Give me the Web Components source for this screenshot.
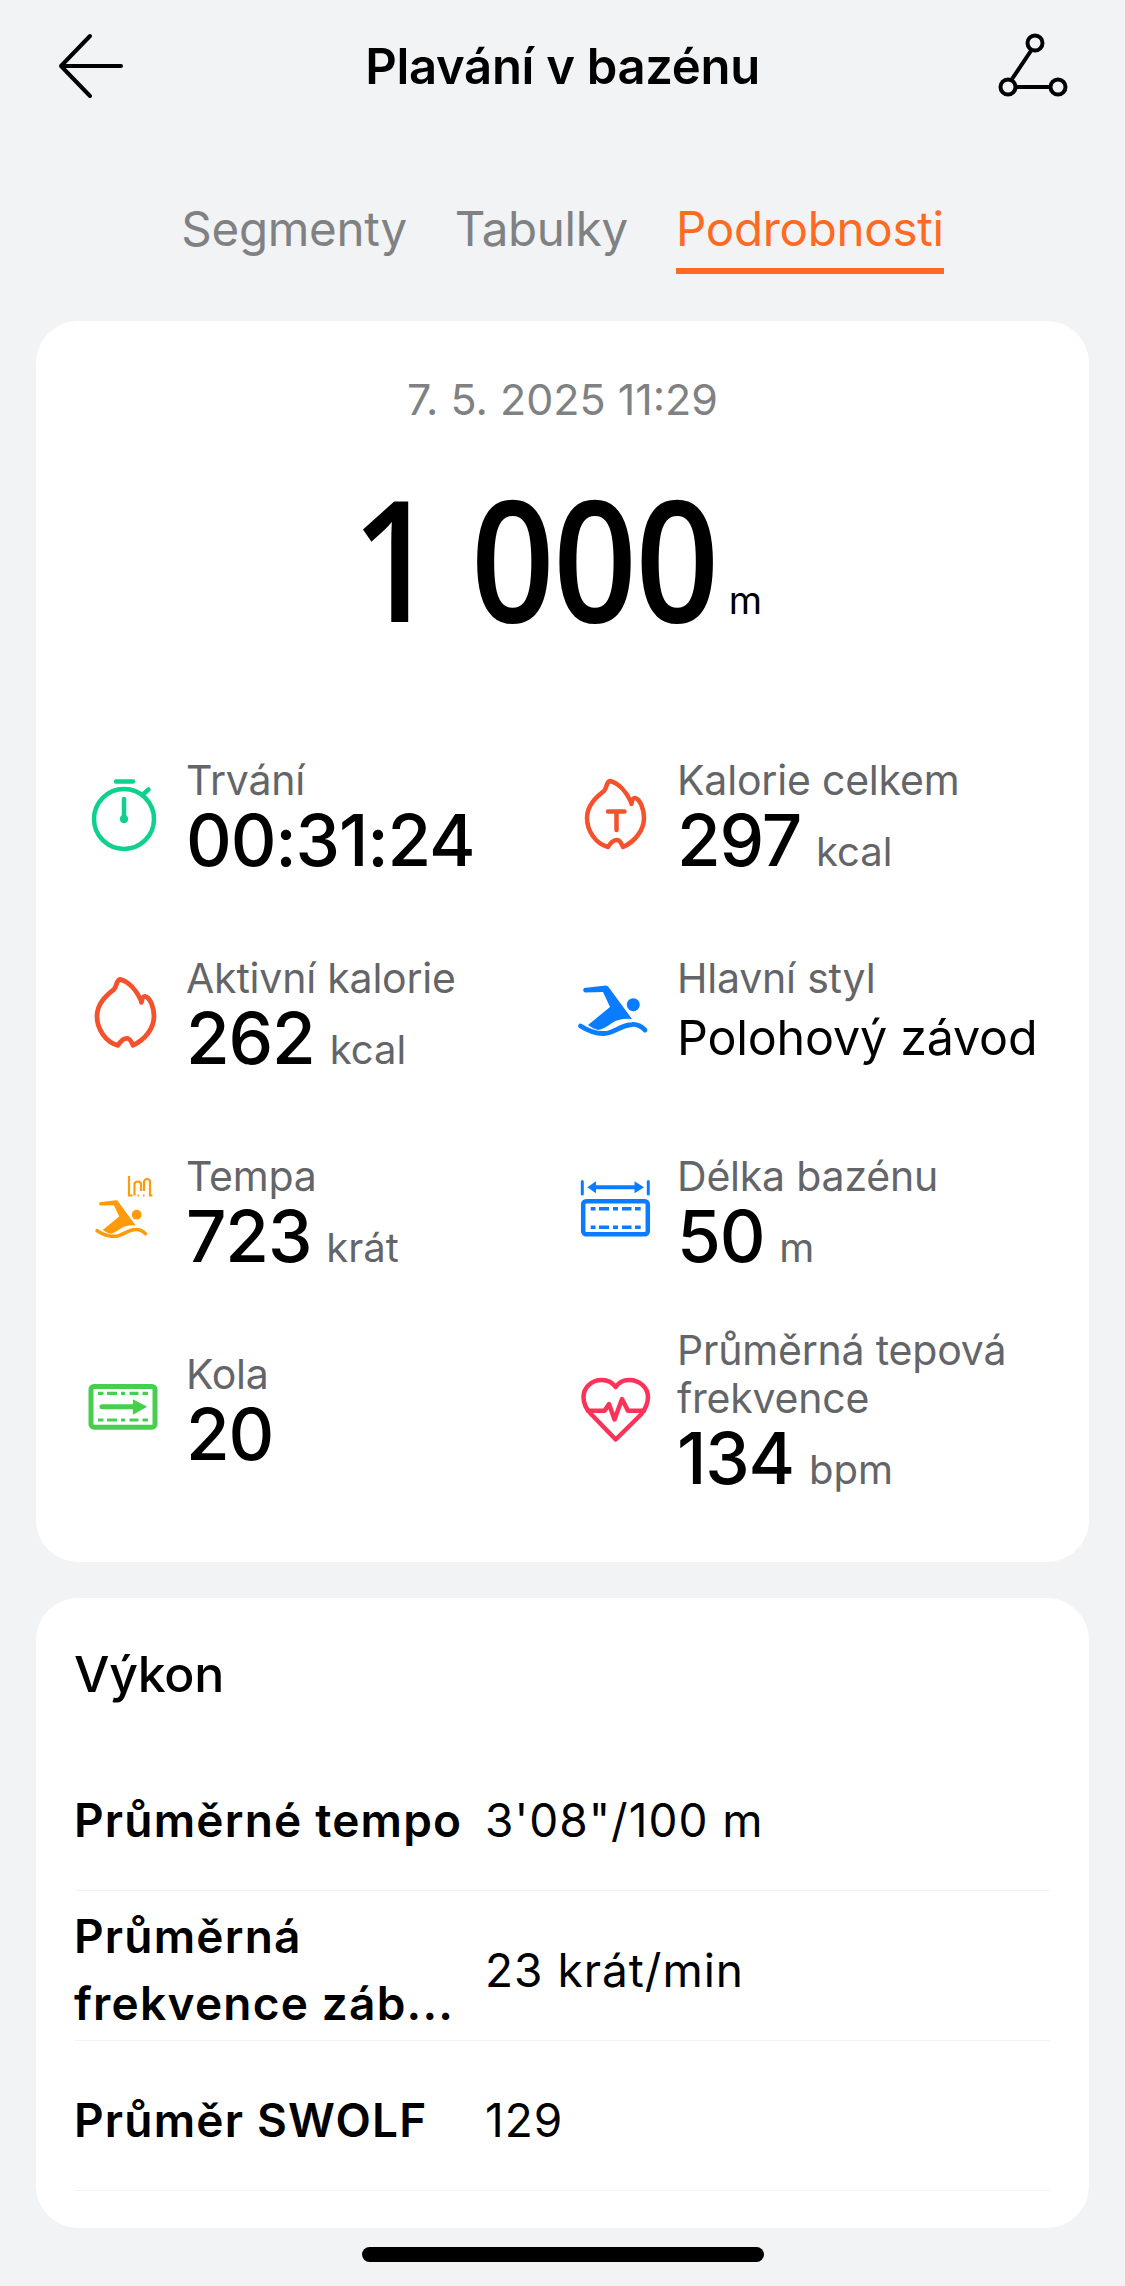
<!DOCTYPE html>
<html lang="cs">
<head>
<meta charset="utf-8">
<title>Plavání v bazénu</title>
<style>
html,body{margin:0;padding:0;background:#f2f3f5;}
body{width:1125px;height:2286px;overflow:hidden;font-family:Inter,"Liberation Sans",sans-serif;color:#000;}
</style>
</head>
<body>
<swim-page>
  <app-header slot="top">Plavání v bazénu</app-header>
  <tab-bar>
    <tab-item>Segmenty</tab-item>
    <tab-item>Tabulky</tab-item>
    <tab-item active>Podrobnosti</tab-item>
  </tab-bar>
  <summary-card date="7. 5. 2025 11:29" distance="1 000" unit="m">
    <stat-item icon="watch" label="Trvání" value="00:31:24"></stat-item>
    <stat-item icon="flame-t" label="Kalorie celkem" value="297" unit="kcal"></stat-item>
    <stat-item icon="flame" label="Aktivní kalorie" value="262" unit="kcal"></stat-item>
    <stat-item icon="swim" label="Hlavní styl" value="Polohový závod" plain></stat-item>
    <stat-item icon="strokes" label="Tempa" value="723" unit="krát"></stat-item>
    <stat-item icon="pool" label="Délka bazénu" value="50" unit="m"></stat-item>
    <stat-item icon="lap" label="Kola" value="20"></stat-item>
    <stat-item icon="heart" label="Průměrná tepová frekvence" value="134" unit="bpm"></stat-item>
  </summary-card>
  <perf-card heading="Výkon">
    <perf-row label="Průměrné tempo" value="3'08&quot;/100 m"></perf-row>
    <perf-row label="Průměrná frekvence záb..." value="23 krát/min"></perf-row>
    <perf-row label="Průměr SWOLF" value="129"></perf-row>
  </perf-card>
  <home-indicator></home-indicator>
</swim-page>
<script>
const ICONS = {
  watch:{box:"25 30 80 80",svg:`<g fill="none" stroke="#0fd08c" stroke-width="4.5" stroke-linecap="round"><circle cx="64" cy="75" r="30"/><path d="M56 37.5H73M83 50.5L88.5 45.5M64 55V75"/></g><circle cx="64" cy="75" r="4.2" fill="#0fd08c"/>`},
  "flame-t":{box:"15 20 80 80",svg:`<g fill="none" stroke="#f4512c" stroke-width="4.5" stroke-linecap="round" stroke-linejoin="round"><path d="M50 27C58 29 66 37 71 48L71.5 50C72 46 73 44 75 44C80 45 84 55 84 64C84 77 74 88 63 93C61 88 59 86 57 86C54 86 51 88 48 93C36 90 27 77 27 64C27 50 38 42 44 37C47 34 46 28 50 27Z"/><path d="M48 57.5H64.5M56.5 57.5V76"/></g>`},
  flame:{box:"25 18 80 80",svg:`<g fill="none" stroke="#f4512c" stroke-width="4.8" stroke-linecap="round" stroke-linejoin="round" transform="translate(10,-1.7)"><path d="M50 27C58 29 66 37 71 48L71.5 50C72 46 73 44 75 44C80 45 84 55 84 64C84 77 74 88 63 93C61 88 59 86 57 86C54 86 51 88 48 93C36 90 27 77 27 64C27 50 38 42 44 37C47 34 46 28 50 27Z"/></g>`},
  swim:{box:"15 18 80 80",svg:`<g fill="#0a7cff"><path d="M24 34L46 31.5Q47.500 31.500 48.500 33L72 65Q60 64 52 69Q44 75 38 76Q33 75 28 71L50 53L43 38L25 38.500Q22 37 24 34Z"/><circle cx="73.300" cy="50.700" r="6.500"/></g><path d="M20.500 72C30 78 38 81 48 79C56 77 62 71 72 70.500C78 70 82 73 85 76" fill="none" stroke="#0a7cff" stroke-width="4.800" stroke-linecap="round"/>`},
  strokes:{box:"25 16 80 80",svg:`<g transform="translate(21.700,22.700) scale(.75)"><g fill="#ff9a0a"><path d="M24 34L46 31.5Q47.500 31.500 48.500 33L72 65Q60 64 52 69Q44 75 38 76Q33 75 28 71L50 53L43 38L25 38.500Q22 37 24 34Z"/><circle cx="73.300" cy="50.700" r="6.500"/></g><path d="M20.500 72C30 78 38 81 48 79C56 77 62 71 72 70.500C78 70 82 73 85 76" fill="none" stroke="#ff9a0a" stroke-width="4.800" stroke-linecap="round"/></g><path d="M69 22V41.500H72.500M74.500 41.500V30Q75 27.500 78 27.500Q80.500 27.500 81 30V37M84 37V28Q84.500 25 87 25Q90 25 90 28V41.500H92.500M77.500 41.500H79M83 41.500H84.500" fill="none" stroke="#ff9a0a" stroke-width="2.200"/>`},
  pool:{box:"15 16 80 80",svg:`<g fill="none" stroke="#0a7cff"><rect x="23.200" y="47.200" width="64.600" height="33" rx="3" stroke-width="4.500"/><path d="M22.300 27.500V40M88.300 27.500V40" stroke-width="3" stroke-linecap="round"/><path d="M33 33.300H78" stroke-width="4"/><path d="M30.700 54.700H35.500M39 54.700H49M53 54.700H58M62 54.700H71.500M75 54.700H80.700M30.700 73.300H35.500M39 73.300H49M53 73.300H58M62 73.300H71.500M75 73.300H80.700" stroke-width="3.400"/></g><path d="M27.300 33.300L36 27.300V39.300ZM84 33.300L74.500 27.300V39.300Z" fill="#0a7cff"/>`},
  lap:{box:"25 14 80 80",svg:`<g fill="none" stroke="#46cf4c"><rect x="31" y="32.500" width="64" height="40.700" rx="3" stroke-width="5"/><path d="M38 39.300H43.500M47 39.300H57M61 39.300H65M69.500 39.300H78.500M82.500 39.300H88M38 66H43.500M47 66H57M61 66H65M69.500 66H78.500M82.500 66H88" stroke-width="3.200"/><path d="M42 52.700H75" stroke-width="5" stroke-linecap="round"/></g><path d="M73.300 46L86.300 52.700L73.300 60Z" fill="#46cf4c" stroke="#46cf4c" stroke-linejoin="round" stroke-width="1"/>`},
  heart:{box:"15 24 80 80",svg:`<g fill="none" stroke="#fb3358" stroke-width="4.500" stroke-linecap="round" stroke-linejoin="round"><path d="M55.700 43C52 38 47 36 42 36C31 36 23.500 44 23.500 53C23.500 60 26 65 31 70L55.700 95.500L80.500 71C85.500 65 88 60 88 53C88 44 80 36 69 36C64 36 59 38 55.700 43Z"/><path d="M28 66.700H44.500L49 60L54.500 75.500L62 55L68 66.700H84"/></g>`}
};
function def(name, css, html){
  customElements.define(name, class extends HTMLElement{
    constructor(){super();this.attachShadow({mode:"open"});}
    connectedCallback(){
      const a=n=>this.getAttribute(n)??"";
      this.shadowRoot.innerHTML=`<style>${css}</style>`+(typeof html==="function"?html(a,this):html);
    }
  });
}
def("swim-page",`:host{display:flex;flex-direction:column;width:1125px;height:2286px;box-sizing:border-box;background:#f2f3f5}`,`<slot name="top"></slot><slot></slot>`);
def("app-header",`:host{display:flex;align-items:center;justify-content:space-between;height:132px;flex:none;padding:0 56px 0 58px;position:relative}
 svg{display:block}
 .t{position:absolute;left:0;right:0;top:0;height:132px;display:flex;align-items:center;justify-content:center;font:600 49px/1 Inter,sans-serif;letter-spacing:-.3px}`,
`<svg width="66" height="66" viewBox="0 0 66 66" fill="none" stroke="#000" stroke-width="4" stroke-linecap="round" stroke-linejoin="round"><path d="M3 33H63M32 3L3 33L32 63"/></svg>
 <div class="t"><slot></slot></div>
 <svg width="72" height="66" viewBox="0 0 72 66" fill="none" stroke="#000" stroke-width="4"><circle cx="38" cy="10" r="7.500"/><circle cx="11" cy="54" r="7.500"/><circle cx="61" cy="54" r="7.500"/><path d="M34.500 17L14 47.500M18.500 54H53.500"/></svg>`);
def("tab-bar",`:host{display:flex;justify-content:center;gap:48px;height:76px;margin-top:59px;flex:none}`,`<slot></slot>`);
def("tab-item",`:host{display:block;box-sizing:border-box;height:83px;color:#808183;font:400 47.500px/76px Inter,sans-serif;letter-spacing:-.3px;white-space:nowrap}
 :host([active]){color:#ff6a22;border-bottom:6px solid #ff6a22}`,`<slot></slot>`);
def("summary-card",`:host{display:block;box-sizing:border-box;flex:none;width:1053px;height:1241px;margin:54px 0 0 36px;background:#fff;border-radius:42px;padding-top:53px}
 .d{height:50px;text-align:center;font:400 43px/50px Inter,sans-serif;color:#808183}
 .h{display:flex;justify-content:center;align-items:baseline;height:180px;margin-top:43px;padding-right:11px}
 .n{display:inline-block;width:377px;white-space:nowrap;font:600 168px/180px "Open Sans",sans-serif;transform:scaleX(.875);transform-origin:0 50%;letter-spacing:-2px}
 .u{font:400 38px/1 Inter,sans-serif;transform:translateY(-8px)}
 .g{display:grid;grid-template-columns:490px 1fr;grid-auto-rows:198px;margin-top:68px;padding-left:49px}`,
(a)=>`<div class="d">${a("date")}</div><div class="h"><span class="n">${a("distance")}</span><span class="u">${a("unit")}</span></div><div class="g"><slot></slot></div>`);
def("stat-item",`:host{display:flex;align-items:center;gap:22px;min-width:0}
 :host(:nth-child(odd)){gap:21px}
 svg{display:block;flex:none}
 .b{min-width:0;width:380px}
 .l{font:400 41px/48px Inter,sans-serif;color:#646568;letter-spacing:-.2px}
 .v{font:500 71px/66px Inter,sans-serif;letter-spacing:-1.2px;margin-top:3px;white-space:nowrap}
 .v.p{font:400 48.400px/66px Inter,sans-serif;letter-spacing:-.2px}
 .u{font:400 40px/1 Inter,sans-serif;color:#646568;margin-left:15px;letter-spacing:0}`,
(a,el)=>{const i=ICONS[a("icon")];const plain=el.hasAttribute("plain");const u=a("unit");
 return `<svg width="80" height="80" viewBox="${i.box}">${i.svg}</svg><div class="b"><div class="l">${a("label")}</div><div class="v${plain?" p":""}">${a("value")}${u?`<span class="u">${u}</span>`:""}</div></div>`});
def("perf-card",`:host{display:block;box-sizing:border-box;flex:none;width:1053px;height:630px;margin:36px 0 0 36px;background:#fff;border-radius:42px;padding:0 39px}
 .h{height:143px;box-sizing:border-box;padding-top:48px;margin-left:-1px;font:500 50px/56px Inter,sans-serif;letter-spacing:-.3px}`,
(a)=>`<div class="h">${a("heading")}</div><slot></slot>`);
def("perf-row",`:host{display:flex;align-items:center;box-sizing:border-box;height:150px;padding-top:9px;border-bottom:1.500px solid #f1f2f3}
 .l{width:410px;flex:none;margin-left:-1px;margin-right:1px;font:600 46px/67px Inter,sans-serif;letter-spacing:1.200px}
 .v{font:400 46px/67px Inter,sans-serif;letter-spacing:1px}`,
(a)=>`<div class="l">${a("label").replace("Průměrná frekvence","Průměrná<br>frekvence")}</div><div class="v">${a("value")}</div>`);
def("home-indicator",`:host{display:block;flex:none;width:402px;height:15px;margin:19px 0 0 362px;background:#000;border-radius:8px}`,``);
</script>
</body>
</html>
